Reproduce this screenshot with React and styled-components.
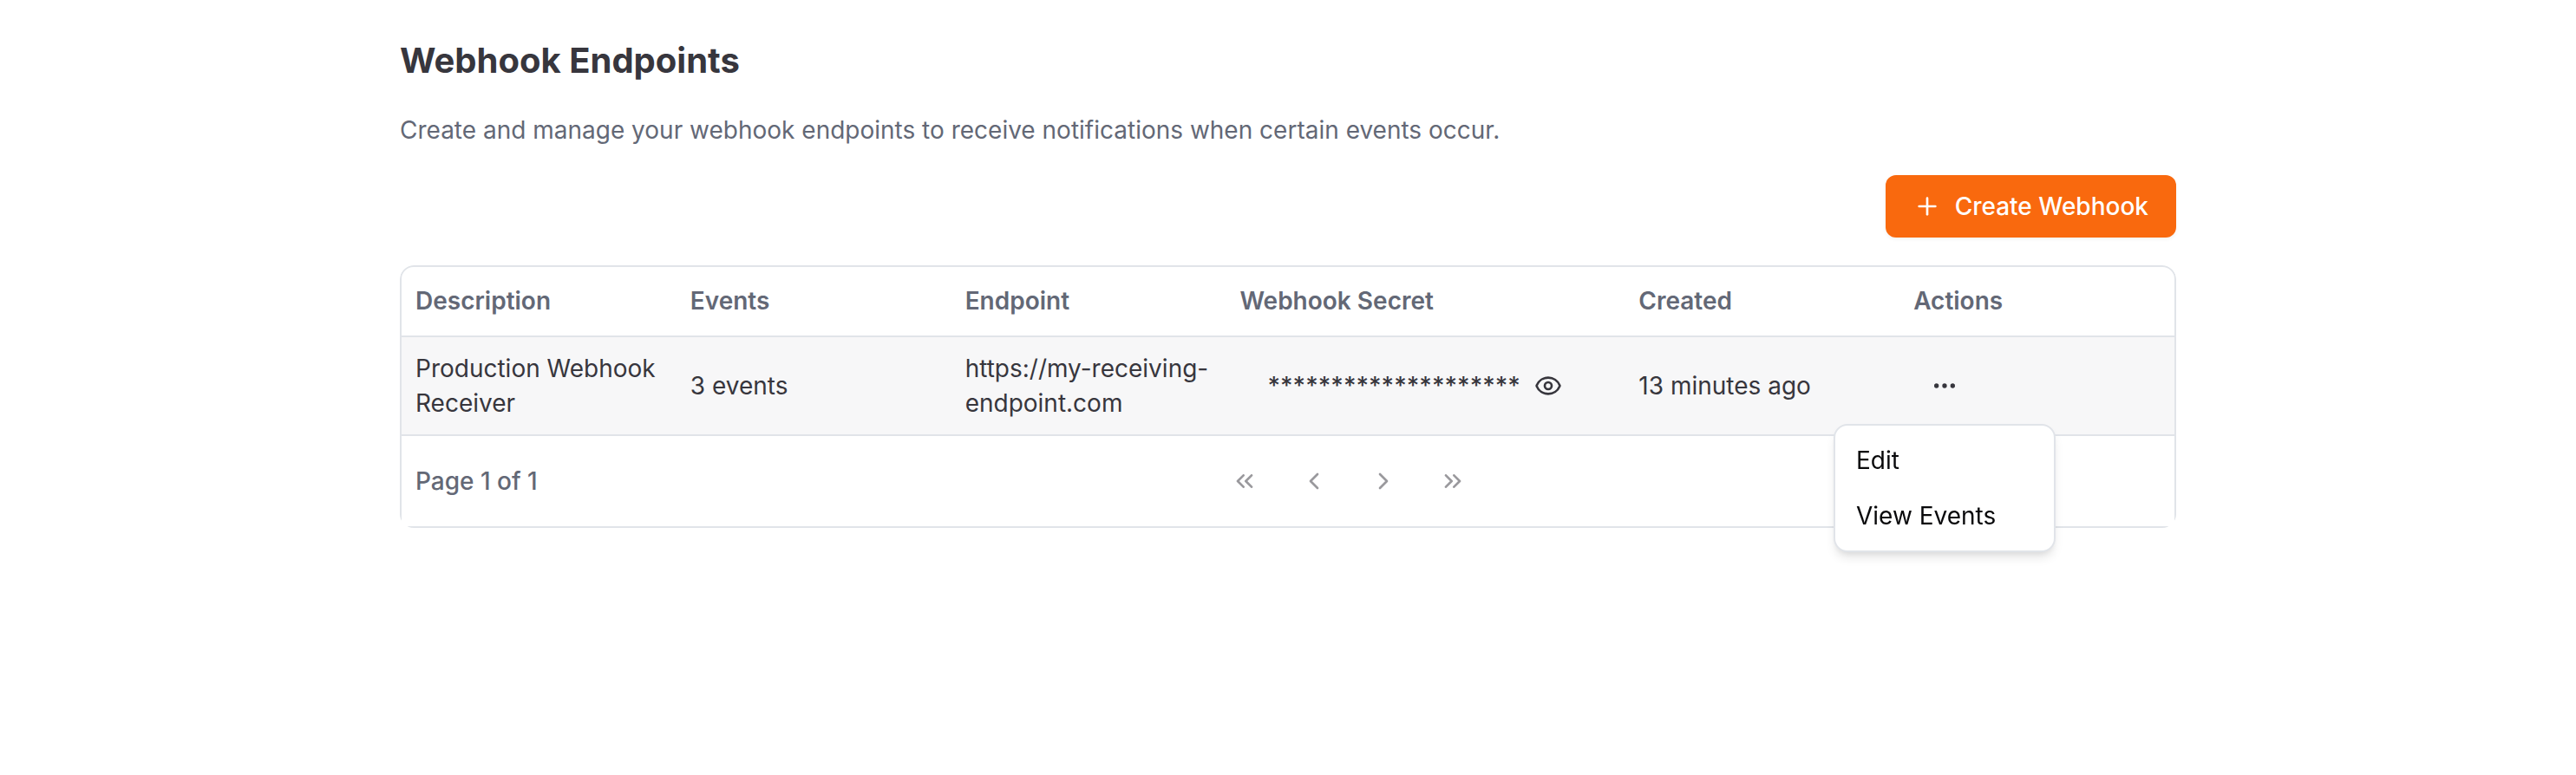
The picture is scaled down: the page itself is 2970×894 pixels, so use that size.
import React, { useState } from 'react';
import styled, { createGlobalStyle } from 'styled-components';
import {
  Plus,
  Eye,
  Ellipsis,
  ChevronsLeft,
  ChevronLeft,
  ChevronRight,
  ChevronsRight,
} from 'lucide-react';
import * as DropdownMenu from '@radix-ui/react-dropdown-menu';

const color = {
  text: '#37363d',
  muted: '#636876',
  border: '#e1e4e9',
  row: '#f7f7f8',
  accent: '#f9690e',
};

const GlobalStyle = createGlobalStyle`
  *, *::before, *::after { box-sizing: border-box; }
  body {
    margin: 0;
    background: #fff;
    color: ${color.text};
    font-family: Inter, "Liberation Sans", sans-serif;
    font-size: 28px;
    line-height: 40px;
  }
  button { font: inherit; color: inherit; cursor: pointer; }
`;

const Page = styled.main`
  display: flex;
  flex-direction: column;
  gap: 32px;
  max-width: 2048px;
  margin: 0 auto;
  padding: 42px 0;
`;

const Intro = styled.header`
  display: flex;
  flex-direction: column;
  gap: 32px;
`;

const Title = styled.h1`
  margin: 0;
  font-size: 40px;
  line-height: 56px;
  font-weight: 700;
`;

const Lead = styled.p`
  margin: 0;
  color: ${color.muted};
`;

const Toolbar = styled.div`
  display: flex;
  justify-content: flex-end;
`;

const PrimaryButton = styled.button`
  display: inline-flex;
  align-items: center;
  gap: 16px;
  height: 72px;
  padding: 0 32px;
  border: 0;
  border-radius: 12px;
  background: ${color.accent};
  color: #fff;
  font-weight: 500;
  box-shadow: 0 2px 4px rgba(0, 0, 0, 0.05);
`;

const Card = styled.section`
  overflow: hidden;
  border-radius: 16px;
`;

const CardFrame = styled.div`
  border: 2px solid ${color.border};
  border-radius: 16px 16px 0 0;
`;

const Table = styled.table`
  width: 100%;
  table-layout: fixed;
  border-collapse: collapse;
`;

const Col = styled.col`
  width: ${(p) => (p.$wide ? '22.5%' : '15.5%')};
`;

const Row = styled.tr`
  border-bottom: 2px solid ${color.border};
  background: ${(p) => (p.$highlighted ? color.row : 'transparent')};
`;

const HeadCell = styled.th`
  height: 80px;
  padding: 0 16px 2px;
  text-align: left;
  vertical-align: middle;
  font-weight: 600;
  color: ${color.muted};
`;

const Cell = styled.td`
  padding: 16px;
  vertical-align: middle;
`;

const SecretButton = styled.button`
  display: inline-flex;
  align-items: center;
  gap: 16px;
  height: 72px;
  padding: 0 32px;
  border: 0;
  background: none;
  font-weight: 500;
  vertical-align: middle;
`;

const IconButton = styled.button`
  display: inline-flex;
  align-items: center;
  justify-content: center;
  width: ${(p) => p.$size}px;
  height: ${(p) => p.$size}px;
  padding: 0;
  border: 0;
  border-radius: 12px;
  background: none;
  vertical-align: middle;
  &:disabled { opacity: 0.5; cursor: default; }
`;

const Footer = styled.footer`
  display: flex;
  align-items: center;
  justify-content: space-between;
  height: 104px;
  padding: 0 16px;
`;

const PageCount = styled.div`
  font-weight: 500;
  color: ${color.muted};
`;

const Pager = styled.nav`
  display: flex;
  gap: 16px;
`;

const Menu = styled(DropdownMenu.Content)`
  width: 256px;
  padding: 8px;
  border: 2px solid ${color.border};
  border-radius: 16px;
  background: #fff;
  color: #09090b;
  outline: none;
  box-shadow: 0 8px 12px -2px rgba(0, 0, 0, 0.1), 0 4px 8px -4px rgba(0, 0, 0, 0.1);
`;

const MenuItem = styled.button`
  display: block;
  width: 100%;
  padding: 12px 16px;
  border: 0;
  border-radius: 8px;
  background: none;
  text-align: left;
  outline: none;
`;

const columns = [
  { label: 'Description' },
  { label: 'Events' },
  { label: 'Endpoint' },
  { label: 'Webhook Secret', wide: true },
  { label: 'Created' },
  { label: 'Actions' },
];

const webhooks = [
  {
    description: 'Production Webhook Receiver',
    events: '3 events',
    endpoint: 'https://my-receiving-endpoint.com',
    created: '13 minutes ago',
  },
];

const pagerButtons = [
  { label: 'First page', Icon: ChevronsLeft },
  { label: 'Previous page', Icon: ChevronLeft },
  { label: 'Next page', Icon: ChevronRight },
  { label: 'Last page', Icon: ChevronsRight },
];

function RowActions() {
  const [open, setOpen] = useState(true);
  return (
    <DropdownMenu.Root open={open} onOpenChange={setOpen} modal={false}>
      <DropdownMenu.Trigger asChild>
        <IconButton $size={72} aria-label="Open actions">
          <Ellipsis size={32} />
        </IconButton>
      </DropdownMenu.Trigger>
      <DropdownMenu.Portal>
        <Menu side="bottom" align="center" sideOffset={8}>
          <DropdownMenu.Item asChild>
            <MenuItem>Edit</MenuItem>
          </DropdownMenu.Item>
          <DropdownMenu.Item asChild>
            <MenuItem>View Events</MenuItem>
          </DropdownMenu.Item>
        </Menu>
      </DropdownMenu.Portal>
    </DropdownMenu.Root>
  );
}

export default function App() {
  return (
    <>
      <GlobalStyle />
      <Page>
        <Intro>
          <Title>Webhook Endpoints</Title>
          <Lead>
            Create and manage your webhook endpoints to receive notifications when certain events
            occur.
          </Lead>
        </Intro>
        <Toolbar>
          <PrimaryButton>
            <Plus size={32} />
            Create Webhook
          </PrimaryButton>
        </Toolbar>
        <Card>
          <CardFrame>
            <Table>
              <colgroup>
                {columns.map((c) => (
                  <Col key={c.label} $wide={c.wide} />
                ))}
              </colgroup>
              <thead>
                <Row>
                  {columns.map((c) => (
                    <HeadCell key={c.label} scope="col">
                      {c.label}
                    </HeadCell>
                  ))}
                </Row>
              </thead>
              <tbody>
                {webhooks.map((w) => (
                  <Row key={w.endpoint} $highlighted>
                    <Cell>{w.description}</Cell>
                    <Cell>{w.events}</Cell>
                    <Cell>{w.endpoint}</Cell>
                    <Cell>
                      <SecretButton aria-label="Show webhook secret">
                        {'*'.repeat(20)}
                        <Eye size={32} />
                      </SecretButton>
                    </Cell>
                    <Cell>{w.created}</Cell>
                    <Cell>
                      <RowActions />
                    </Cell>
                  </Row>
                ))}
              </tbody>
            </Table>
            <Footer>
              <PageCount>Page 1 of 1</PageCount>
              <Pager aria-label="Pagination">
                {pagerButtons.map(({ label, Icon }) => (
                  <IconButton key={label} $size={64} aria-label={label} disabled>
                    <Icon size={32} />
                  </IconButton>
                ))}
              </Pager>
              <div />
            </Footer>
          </CardFrame>
        </Card>
      </Page>
    </>
  );
}
